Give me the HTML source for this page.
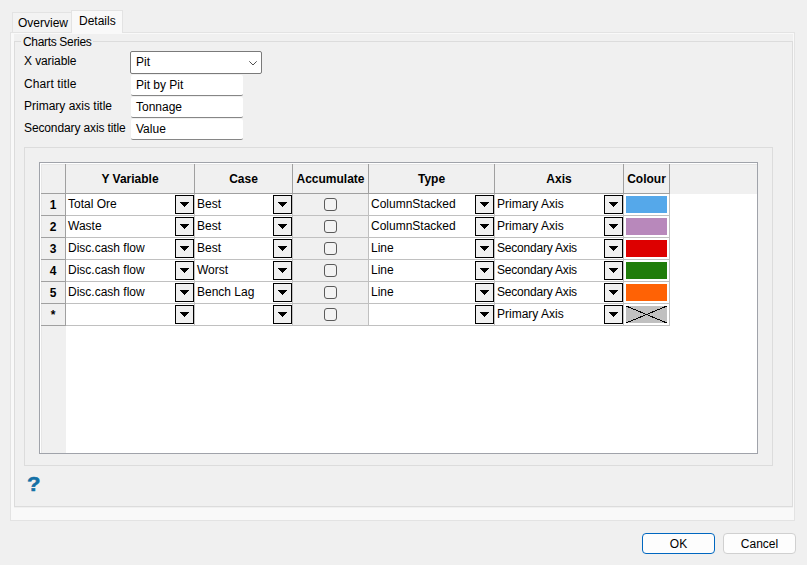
<!DOCTYPE html>
<html><head><meta charset="utf-8"><title>Charts</title>
<style>
html,body{margin:0;padding:0;}
body{width:807px;height:565px;background:#f0f0f0;position:relative;overflow:hidden;font-family:"Liberation Sans",sans-serif;font-size:12px;color:#000;}
.a{position:absolute;box-sizing:border-box;}
.t{position:absolute;white-space:nowrap;line-height:16px;height:16px;}
.b{font-weight:bold;}
.vl{position:absolute;width:1px;background:#a0a0a0;}
.hl{position:absolute;height:1px;background:#a0a0a0;}
.dd{position:absolute;box-sizing:border-box;width:19px;height:19px;border:1px solid #000;background:#f0f0f0;}
.dd:after{content:"";position:absolute;left:4px;top:6px;width:9px;height:5px;background:linear-gradient(#000,#000) 0 0/9px 1px no-repeat,linear-gradient(#000,#000) 1px 1px/7px 1px no-repeat,linear-gradient(#000,#000) 2px 2px/5px 1px no-repeat,linear-gradient(#000,#000) 3px 3px/3px 1px no-repeat,linear-gradient(#000,#000) 4px 4px/1px 1px no-repeat;}
.cb{position:absolute;box-sizing:border-box;width:13px;height:13px;border:1px solid #5a5a5a;border-radius:3px;background:#f3f3f3;}
.inp{position:absolute;box-sizing:border-box;left:131px;width:112px;height:21px;background:#fff;border-bottom:1px solid #868686;border-radius:2px;}
</style></head><body>

<div class="a" style="left:10px;top:32px;width:785px;height:489px;background:#f9f9f9;border:1px solid #e3e3e3;"></div>
<div class="a" style="left:14px;top:34px;width:779px;height:474px;background:#f0f0f0;"></div>
<div class="a" style="left:12px;top:12px;width:60px;height:20px;background:#f3f3f3;border:1px solid #e3e3e3;border-bottom:none;"></div>
<div class="a" style="left:71px;top:10px;width:52px;height:23px;background:#f9f9f9;border:1px solid #e3e3e3;border-bottom:none;"></div>
<div class="t" style="left:18px;top:15px;">Overview</div>
<div class="t" style="left:79px;top:13px;">Details</div>
<div class="a" style="left:14px;top:41px;width:779px;height:466px;border:1px solid #dcdcdc;"></div>
<div class="t" style="left:21px;top:34px;background:#f0f0f0;padding:0 2px;letter-spacing:-0.33px;">Charts Series</div>
<div class="t" style="left:24px;top:53px;letter-spacing:-0.1px;">X variable</div>
<div class="t" style="left:24px;top:76px;letter-spacing:0.1px;">Chart title</div>
<div class="t" style="left:24px;top:98px;letter-spacing:0px;">Primary axis title</div>
<div class="t" style="left:24px;top:120px;letter-spacing:-0.12px;">Secondary axis title</div>
<div class="a" style="left:130px;top:51px;width:132px;height:23px;background:#fff;border:1px solid #7a7a7a;border-radius:2px;"></div>
<div class="t" style="left:136px;top:54px;">Pit</div>
<svg class="a" style="left:247px;top:59px;" width="12" height="8" viewBox="0 0 12 8"><path d="M2.3 2.3 L6 6 L9.7 2.3" fill="none" stroke="#505050" stroke-width="1"/></svg>
<div class="inp" style="top:75px;"></div>
<div class="t" style="left:136px;top:77px;">Pit by Pit</div>
<div class="inp" style="top:97px;"></div>
<div class="t" style="left:136px;top:99px;">Tonnage</div>
<div class="inp" style="top:119px;"></div>
<div class="t" style="left:136px;top:121px;">Value</div>
<div class="a" style="left:24px;top:147px;width:749px;height:319px;border:1px solid #dcdcdc;"></div>
<div class="a" style="left:39px;top:162px;width:719px;height:292px;background:#fff;border:1px solid #a0a3aa;"></div>
<div class="a" style="left:41px;top:164px;width:716px;height:30px;background:#f0f0f0;"></div>
<div class="a" style="left:41px;top:164px;width:25px;height:289px;background:#f0f0f0;"></div>
<div class="a" style="left:293px;top:194px;width:75px;height:131px;background:#f0f0f0;"></div>
<div class="a" style="left:41px;top:164px;width:716px;height:1px;background:#e6e6e6;"></div>
<div class="a" style="left:41px;top:164px;width:1px;height:289px;background:#e6e6e6;"></div>
<div class="hl" style="left:66px;top:215px;width:604px;background:#c0c0c0;"></div>
<div class="hl" style="left:41px;top:215px;width:25px;"></div>
<div class="hl" style="left:66px;top:237px;width:604px;background:#c0c0c0;"></div>
<div class="hl" style="left:41px;top:237px;width:25px;"></div>
<div class="hl" style="left:66px;top:259px;width:604px;background:#c0c0c0;"></div>
<div class="hl" style="left:41px;top:259px;width:25px;"></div>
<div class="hl" style="left:66px;top:281px;width:604px;background:#c0c0c0;"></div>
<div class="hl" style="left:41px;top:281px;width:25px;"></div>
<div class="hl" style="left:66px;top:303px;width:604px;background:#c0c0c0;"></div>
<div class="hl" style="left:41px;top:303px;width:25px;"></div>
<div class="hl" style="left:66px;top:325px;width:604px;background:#c0c0c0;"></div>
<div class="hl" style="left:41px;top:325px;width:25px;"></div>
<div class="vl" style="left:65px;top:194px;height:132px;background:#a0a0a0;"></div>
<div class="vl" style="left:65px;top:164px;height:30px;"></div>
<div class="vl" style="left:194px;top:194px;height:132px;background:#c0c0c0;"></div>
<div class="vl" style="left:194px;top:164px;height:30px;"></div>
<div class="vl" style="left:292px;top:194px;height:132px;background:#c0c0c0;"></div>
<div class="vl" style="left:292px;top:164px;height:30px;"></div>
<div class="vl" style="left:368px;top:194px;height:132px;background:#c0c0c0;"></div>
<div class="vl" style="left:368px;top:164px;height:30px;"></div>
<div class="vl" style="left:494px;top:194px;height:132px;background:#c0c0c0;"></div>
<div class="vl" style="left:494px;top:164px;height:30px;"></div>
<div class="vl" style="left:623px;top:194px;height:132px;background:#c0c0c0;"></div>
<div class="vl" style="left:623px;top:164px;height:30px;"></div>
<div class="vl" style="left:669px;top:194px;height:132px;background:#c0c0c0;"></div>
<div class="vl" style="left:669px;top:164px;height:30px;"></div>
<div class="hl" style="left:41px;top:193px;width:629px;"></div>
<div class="t b" style="left:66px;width:128px;top:171px;text-align:center;">Y Variable</div>
<div class="t b" style="left:195px;width:97px;top:171px;text-align:center;">Case</div>
<div class="t b" style="left:293px;width:75px;top:171px;text-align:center;">Accumulate</div>
<div class="t b" style="left:369px;width:125px;top:171px;text-align:center;">Type</div>
<div class="t b" style="left:495px;width:128px;top:171px;text-align:center;">Axis</div>
<div class="t b" style="left:624px;width:45px;top:171px;text-align:center;">Colour</div>
<div class="t b" style="left:41px;width:24px;top:197px;text-align:center;">1</div>
<div class="t" style="left:68px;top:196px;">Total Ore</div>
<div class="t" style="left:197px;top:196px;">Best</div>
<div class="t" style="left:371px;top:196px;">ColumnStacked</div>
<div class="t" style="left:497px;top:196px;">Primary Axis</div>
<div class="dd" style="left:175px;top:195px;"></div>
<div class="dd" style="left:273px;top:195px;"></div>
<div class="dd" style="left:475px;top:195px;"></div>
<div class="dd" style="left:604px;top:195px;"></div>
<div class="cb" style="left:324px;top:198px;"></div>
<div class="a" style="left:626px;top:196px;width:41px;height:17px;background:#55a8ea;"></div>
<div class="t b" style="left:41px;width:24px;top:219px;text-align:center;">2</div>
<div class="t" style="left:68px;top:218px;">Waste</div>
<div class="t" style="left:197px;top:218px;">Best</div>
<div class="t" style="left:371px;top:218px;">ColumnStacked</div>
<div class="t" style="left:497px;top:218px;">Primary Axis</div>
<div class="dd" style="left:175px;top:217px;"></div>
<div class="dd" style="left:273px;top:217px;"></div>
<div class="dd" style="left:475px;top:217px;"></div>
<div class="dd" style="left:604px;top:217px;"></div>
<div class="cb" style="left:324px;top:220px;"></div>
<div class="a" style="left:626px;top:218px;width:41px;height:17px;background:#b888bb;"></div>
<div class="t b" style="left:41px;width:24px;top:241px;text-align:center;">3</div>
<div class="t" style="left:68px;top:240px;">Disc.cash flow</div>
<div class="t" style="left:197px;top:240px;">Best</div>
<div class="t" style="left:371px;top:240px;">Line</div>
<div class="t" style="left:497px;top:240px;letter-spacing:-0.2px;">Secondary Axis</div>
<div class="dd" style="left:175px;top:239px;"></div>
<div class="dd" style="left:273px;top:239px;"></div>
<div class="dd" style="left:475px;top:239px;"></div>
<div class="dd" style="left:604px;top:239px;"></div>
<div class="cb" style="left:324px;top:242px;"></div>
<div class="a" style="left:626px;top:240px;width:41px;height:17px;background:#dd0000;"></div>
<div class="t b" style="left:41px;width:24px;top:263px;text-align:center;">4</div>
<div class="t" style="left:68px;top:262px;">Disc.cash flow</div>
<div class="t" style="left:197px;top:262px;">Worst</div>
<div class="t" style="left:371px;top:262px;">Line</div>
<div class="t" style="left:497px;top:262px;letter-spacing:-0.2px;">Secondary Axis</div>
<div class="dd" style="left:175px;top:261px;"></div>
<div class="dd" style="left:273px;top:261px;"></div>
<div class="dd" style="left:475px;top:261px;"></div>
<div class="dd" style="left:604px;top:261px;"></div>
<div class="cb" style="left:324px;top:264px;"></div>
<div class="a" style="left:626px;top:262px;width:41px;height:17px;background:#207d0a;"></div>
<div class="t b" style="left:41px;width:24px;top:285px;text-align:center;">5</div>
<div class="t" style="left:68px;top:284px;">Disc.cash flow</div>
<div class="t" style="left:197px;top:284px;">Bench Lag</div>
<div class="t" style="left:371px;top:284px;">Line</div>
<div class="t" style="left:497px;top:284px;letter-spacing:-0.2px;">Secondary Axis</div>
<div class="dd" style="left:175px;top:283px;"></div>
<div class="dd" style="left:273px;top:283px;"></div>
<div class="dd" style="left:475px;top:283px;"></div>
<div class="dd" style="left:604px;top:283px;"></div>
<div class="cb" style="left:324px;top:286px;"></div>
<div class="a" style="left:626px;top:284px;width:41px;height:17px;background:#ff6205;"></div>
<div class="t b" style="left:41px;width:24px;top:307px;text-align:center;">*</div>
<div class="t" style="left:497px;top:306px;">Primary Axis</div>
<div class="dd" style="left:175px;top:305px;"></div>
<div class="dd" style="left:273px;top:305px;"></div>
<div class="dd" style="left:475px;top:305px;"></div>
<div class="dd" style="left:604px;top:305px;"></div>
<div class="cb" style="left:324px;top:308px;"></div>
<svg class="a" style="left:626px;top:306px;" width="41" height="17" viewBox="0 0 41 17"><rect width="41" height="17" fill="#c0c0c0"/><path d="M0 0 L41 17 M41 0 L0 17" stroke="#000" stroke-width="1" shape-rendering="crispEdges"/></svg>
<div class="t b" style="left:27px;top:473px;font-size:20px;line-height:22px;height:22px;color:#1470a6;-webkit-text-stroke:0.6px #1470a6;transform:scaleX(1.1);transform-origin:0 0;">?</div>
<div class="a" style="left:642px;top:533px;width:73px;height:21px;background:#fdfdfd;border:1px solid #0067c0;border-radius:4px;"></div>
<div class="t" style="left:642px;width:73px;top:536px;text-align:center;">OK</div>
<div class="a" style="left:723px;top:533px;width:73px;height:21px;background:#fdfdfd;border:1px solid #d0d0d0;border-radius:4px;"></div>
<div class="t" style="left:723px;width:73px;top:536px;text-align:center;">Cancel</div>
</body></html>
